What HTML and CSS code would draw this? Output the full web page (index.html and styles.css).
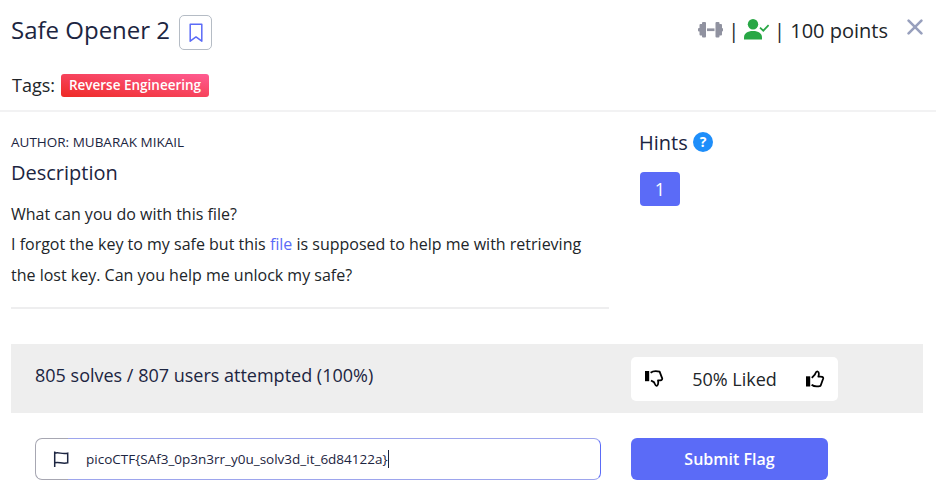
FILE: index.html
```html
<!DOCTYPE html>
<html lang="en">
<head>
<meta charset="utf-8">
<title>Safe Opener 2</title>
<link rel="stylesheet" href="styles.css">
</head>
<body>
<header class="header">
  <div class="title-row">
    <h1 class="title">Safe Opener 2</h1>
    <button class="bookmark" aria-label="Bookmark">
      <svg width="14" height="20" viewBox="0 0 14 20"><path d="M1.2 1.2h11.6v17L7 13.900l-5.800 4.300z" fill="none" stroke="#5b6bf7" stroke-width="1.5" stroke-linejoin="round"/></svg>
    </button>
    <div class="meta">
      <svg class="dumbbell" width="26" height="16" viewBox="0 0 26 16" fill="#9092a0"><rect x="4" y="0" width="4" height="15.500" rx="1"/><rect x="1.500" y="2" width="3.500" height="11.500" rx="1"/><rect x="0" y="6" width="3" height="3.500" rx="1"/><rect x="9" y="6.400" width="7.500" height="2.700"/><rect x="17.500" y="0" width="4" height="15.500" rx="1"/><rect x="20.500" y="2" width="3.500" height="11.500" rx="1"/><rect x="22.500" y="6" width="2.500" height="3.500" rx="1"/></svg>
      <span class="bar">|</span>
      <svg class="user" width="26" height="21" viewBox="0 0 26 21"><circle cx="9" cy="5.300" r="5.200" fill="#28a745"/><path d="M0 20.500v-2.100C0 14.500 3.400 12 9 12s9 2.500 9 6.400v2.100z" fill="#28a745"/><path d="M16 8.600l3.300 3.100 5.300-5.600" fill="none" stroke="#28a745" stroke-width="1.700"/></svg>
      <span class="bar">|</span>
      <span class="points">100 points</span>
    </div>
    <button class="close" aria-label="Close"><svg width="16" height="16" viewBox="0 0 16 16"><path d="M1.600 1.600l12.800 12.800M14.400 1.600L1.600 14.400" stroke="#98a0bd" stroke-width="2.600" stroke-linecap="round"/></svg></button>
  </div>
  <div class="tags"><span class="tags-label">Tags:</span><span class="tag">Reverse Engineering</span></div>
</header>
<main class="body">
  <section class="details">
    <p class="author">AUTHOR: MUBARAK MIKAIL</p>
    <h2 class="subtitle">Description</h2>
    <p class="text">What can you do with this file?<br>I forgot the key to my safe but this <a class="link">file</a> is supposed to help me with retrieving<br>the lost key. Can you help me unlock my safe?</p>
  </section>
  <aside class="hints">
    <div class="hints-head"><h2 class="hints-title">Hints</h2><span class="help">?</span></div>
    <button class="hint">1</button>
  </aside>
</main>
<section class="stats">
  <div class="solves"><span>805 solves / 807 users attempted (100%)</span></div>
  <div class="rating">
    <svg class="thumb" width="20" height="18" viewBox="0 0 20 18"><path d="M1 1h4.200v10.200H1z"/><path d="M6.600 2.800C9 .9 12.300.8 15.600 1.700L18.200 8.300c.3 1.700-1.300 2.400-4.200 2.100.4 2.200.2 4.800-1.200 5.400-1.600.4-1.900-2.400-2.900-3.700L7 10.500" fill="none" stroke="#000" stroke-width="1.800" stroke-linejoin="round"/></svg>
    <span class="liked">50% Liked</span>
    <svg class="thumb" width="20" height="18" viewBox="0 0 20 18"><path d="M1 6.300h4.200v10.200H1z"/><path d="M6.600 14.700c2.400 1.900 5.700 2 9 1.100L18.200 8.500C18.500 6.900 16.800 6.300 13.300 6.700c.7-2.200.8-4.700-.7-5.200-1.600-.4-2 1.400-2.800 3.200L6.800 7.800" fill="none" stroke="#000" stroke-width="1.800" stroke-linejoin="round"/></svg>
  </div>
</section>
<form class="submit">
  <div class="field">
    <div class="addon"><svg width="16" height="17" viewBox="0 0 16 17"><path d="M1.700 .5v15.500M1.700 2.200c4-1.600 7 1.500 13 0v9.600c-6 1.500-9-1.600-13 0" fill="none" stroke="#1c2541" stroke-width="1.500"/></svg></div>
    <div class="input"><span class="value">picoCTF{SAf3_0p3n3rr_y0u_solv3d_it_6d84122a}</span><i class="caret"></i></div>
  </div>
  <button class="send" type="button">Submit Flag</button>
</form>
</body>
</html>
```
FILE: styles.css
```css
* { box-sizing: border-box; }
body { margin: 0; width: 936px; height: 500px; overflow: hidden; background: #fff; color: #212529; font-family: "Open Sans", sans-serif; }
h1, h2, p { margin: 0; font-weight: 400; }
button { padding: 0; border: 0; font-family: inherit; }
svg { display: block; flex: none; }
span { white-space: nowrap; }
.header { height: 112px; border-bottom: 2px solid #f2f2f3; }
.title-row { display: flex; align-items: flex-start; height: 61px; padding-left: 11px; }
.title { width: 168px; padding-top: 13px; font-size: 24px; line-height: 34px; color: #1c2541; white-space: nowrap; }
.bookmark { display: flex; align-items: center; justify-content: center; width: 33px; height: 35px; margin-top: 15px; border: 1px solid #b5bcc5; border-radius: 5px; background: #fff; }
.meta { display: flex; align-items: flex-start; width: 190px; margin: 14px 0 0 486px; font-size: 20px; line-height: 34px; }
.dumbbell { margin-top: 8px; }
.bar { width: 20px; text-align: center; }
.user { margin-top: 5px; }
.points { padding-left: 1px; }
.close { margin: 19px 0 0 19px; background: none; }
.tags { display: flex; align-items: center; height: 49px; padding-left: 12px; }
.tags-label { width: 49px; font-size: 18px; line-height: 24px; padding-bottom: 2px; }
.tag { height: 23px; width: 148px; border-radius: 3px; background: linear-gradient(to top right, #ee2a24, #ff5c93); color: #fff; font-size: 13.5px; font-weight: 600; line-height: 23px; text-align: center; }
.body { display: flex; height: 232px; padding: 20px 11px 0; }
.details { width: 598px; height: 177px; border-bottom: 2px solid #eeeeef; }
.author { font-size: 13.5px; line-height: 20px; color: #1c2541; }
.subtitle { margin-top: 6px; font-size: 20px; line-height: 30px; color: #1c2541; }
.text { margin-top: 11px; font-size: 16px; line-height: 30.4px; white-space: nowrap; }
.link { color: #5b6bf7; }
.hints { margin-left: 30px; }
.hints-head { display: flex; height: 40px; }
.hints-title { width: 54px; font-size: 20px; line-height: 22px; color: #1c2541; }
.help { width: 20px; height: 20px; border-radius: 50%; background: #1e8efa; color: #fff; font-size: 14px; font-weight: 700; line-height: 20px; text-align: center; }
.hint { width: 40px; height: 34px; margin-left: 1px; border-radius: 4px; background: #5b6bf7; color: #fff; font-size: 18px; }
.stats { display: flex; height: 69px; margin: 0 13px 0 11px; padding: 13px 24px 0; background: #eee; }
.solves { width: 596px; font-size: 18px; line-height: 37px; color: #1c2541; }
.rating { display: flex; align-items: center; justify-content: space-between; width: 207px; height: 44px; padding: 0 13px; border-radius: 5px; background: #fff; }
.liked { font-size: 18px; }
.submit { display: flex; gap: 30px; padding: 25px 0 0 35px; }
.field { display: flex; width: 566px; height: 42px; }
.addon { display: flex; align-items: center; width: 33px; padding-left: 17px; border: 1px solid #a7a7b2; border-right: 0; border-radius: 7px 0 0 7px; }
.input { display: flex; align-items: center; flex: 1; padding-left: 18px; border: 1px solid #9da5ed; border-left: 0; border-right-color: #5b6bf7; border-radius: 0 7px 7px 0; color: #1c2541; font-size: 13.5px; }
.caret { width: 1px; height: 18px; background: #1c2541; }
.send { width: 197px; height: 42px; border-radius: 6px; background: #5b6bf7; color: #fff; font-size: 16px; font-weight: 600; }
```
